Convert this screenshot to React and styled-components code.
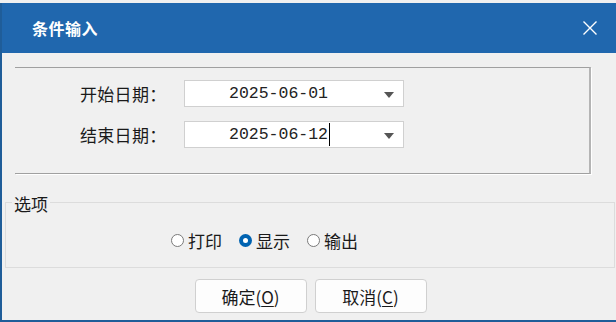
import React, { useState } from "react"
import styled, { createGlobalStyle } from "styled-components"

const GlobalStyle = createGlobalStyle`
  html, body {
    margin: 0;
    padding: 0;
    background: #f0f0f0;
  }
  body {
    font-family: "Noto Sans CJK SC", "Noto Sans", sans-serif;
    color: #1a1a1a;
  }
`

const Window = styled.div`
  margin-top: 3px;
  width: 616px;
  height: 319px;
  box-sizing: border-box;
  border-left: 2px solid #1f5d99;
  border-bottom: 2px solid #1f5d99;
  background: #f0f0f0;
  display: flex;
  flex-direction: column;
`

const TitleBar = styled.div`
  height: 50px;
  flex: none;
  background: #2067ae;
  display: flex;
  align-items: center;
  justify-content: space-between;
  padding: 0 18px 0 30px;
  color: #fff;
`

const Title = styled.span`
  font-size: 16px;
  font-weight: 700;
  letter-spacing: 0.5px;
`

const CloseBtn = styled.span`
  display: flex;
  width: 16px;
  height: 16px;
`

const Body = styled.div`
  flex: 1;
  display: flex;
  flex-direction: column;
  padding: 14px 0 0 3px;
`

const DateGroup = styled.div`
  margin-left: 10px;
  width: 576px;
  height: 107px;
  box-sizing: border-box;
  border-top: 1px solid #a0a0a0;
  border-bottom: 1px solid #a0a0a0;
  border-right: 2px solid #b4b4b4;
  box-shadow: 1px 1px 0 #ffffff;
  padding: 12px 0 0 65px;
  display: flex;
  flex-direction: column;
  gap: 14px;
`

const Row = styled.div`
  display: flex;
  align-items: center;
`

const Label = styled.span`
  width: 104px;
  font-size: 17px;
  letter-spacing: 0.3px;
`

const DateBox = styled.div`
  position: relative;
  width: 220px;
  height: 27px;
  box-sizing: border-box;
  background: #fff;
  border: 1px solid #d0d0d0;
  display: flex;
  align-items: center;
  padding-left: 44px;
  font-family: "Liberation Mono", "DejaVu Sans Mono", monospace;
  font-size: 16.5px;
  color: #222;
`

const Caret = styled.span`
  display: inline-block;
  width: 1px;
  height: 23px;
  background: #000;
  margin-left: 1px;
`

const Arrow = styled.span`
  position: absolute;
  right: 9px;
  top: 11px;
  width: 0;
  height: 0;
  border-left: 5px solid transparent;
  border-right: 5px solid transparent;
  border-top: 6px solid #555;
`

const OptionGroup = styled.div`
  position: relative;
  margin: 28px 0 0 0;
  width: 610px;
  height: 66px;
  box-sizing: border-box;
  border: 1px solid #dcdcdc;
  display: flex;
  justify-content: flex-start;
  align-items: center;
  padding: 10px 0 0 165px;
  gap: 17px;
`

const Legend = styled.span`
  position: absolute;
  left: 6px;
  top: -11px;
  padding: 0 2px;
  background: #f0f0f0;
  font-size: 17px;
  line-height: 24px;
`

const Option = styled.label`
  display: flex;
  align-items: center;
  gap: 4px;
  font-size: 17px;
  cursor: pointer;
`

const Dot = styled.span`
  flex: none;
  width: 13px;
  height: 13px;
  box-sizing: border-box;
  border-radius: 50%;
  border: ${p => (p.$on ? "none" : "1px solid #7a7a7a")};
  background: ${p => (p.$on ? "#0063b1" : "#fff")};
  display: flex;
  align-items: center;
  justify-content: center;
  &::after {
    content: "";
    display: ${p => (p.$on ? "block" : "none")};
    width: 5px;
    height: 5px;
    border-radius: 50%;
    background: #fff;
  }
`

const Buttons = styled.div`
  display: flex;
  justify-content: center;
  gap: 8px;
  margin-top: 11px;
`

const Button = styled.button`
  width: 112px;
  height: 34px;
  background: #fdfdfd;
  border: 1px solid #d0d0d0;
  border-radius: 4px;
  font-family: "Noto Sans CJK SC", "Noto Sans", sans-serif;
  font-size: 17px;
  color: #1a1a1a;
  padding: 0;
  > u {
    text-underline-offset: 2px;
  }
`

const options = ["打印", "显示", "输出"]

export default function App() {
  const [sel, setSel] = useState("显示")
  return (
    <>
      <GlobalStyle />
      <Window>
        <TitleBar>
          <Title>条件输入</Title>
          <CloseBtn>
            <svg width="16" height="16" viewBox="0 0 16 16">
              <path d="M1.5 1.5 L14.5 14.5 M14.5 1.5 L1.5 14.5" stroke="#fff" strokeWidth="1.4" />
            </svg>
          </CloseBtn>
        </TitleBar>
        <Body>
          <DateGroup>
            <Row>
              <Label>开始日期：</Label>
              <DateBox>
                2025-06-01
                <Arrow />
              </DateBox>
            </Row>
            <Row>
              <Label>结束日期：</Label>
              <DateBox>
                2025-06-12<Caret />
                <Arrow />
              </DateBox>
            </Row>
          </DateGroup>
          <OptionGroup>
            <Legend>选项</Legend>
            {options.map(o => (
              <Option key={o} onClick={() => setSel(o)}>
                <Dot $on={sel === o} />
                {o}
              </Option>
            ))}
          </OptionGroup>
          <Buttons>
            <Button>确定(<u>O</u>)</Button>
            <Button>取消(<u>C</u>)</Button>
          </Buttons>
        </Body>
      </Window>
    </>
  )
}
